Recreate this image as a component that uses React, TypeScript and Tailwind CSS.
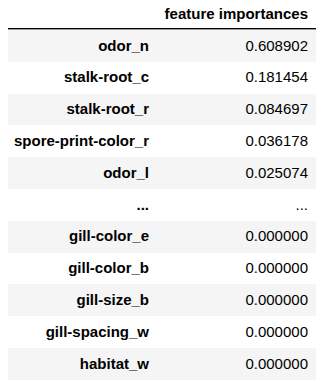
import React from "react";

const rows: [string, string][] = [
  ["odor_n", "0.608902"],
  ["stalk-root_c", "0.181454"],
  ["stalk-root_r", "0.084697"],
  ["spore-print-color_r", "0.036178"],
  ["odor_l", "0.025074"],
  ["...", "..."],
  ["gill-color_e", "0.000000"],
  ["gill-color_b", "0.000000"],
  ["gill-size_b", "0.000000"],
  ["gill-spacing_w", "0.000000"],
  ["habitat_w", "0.000000"],
];

export default function App() {
  return (
    <div
      className="w-[322px] h-[382px] overflow-hidden bg-white text-black"
      style={{ fontFamily: '"Liberation Sans", Arial, sans-serif' }}
    >
      <div className="ml-[8px] w-[308px] text-[15px]">
        <div className="flex h-[29px] items-center border-b border-black">
          <div className="w-[149px]" />
          <div className="flex-1 pr-[8px] text-right font-bold">feature importances</div>
        </div>
        <div className="h-[1px] bg-[#9a9a9a]" />
        {rows.map(([k, v], i) => (
          <div
            key={k}
            className={`flex h-[31.8px] items-center ${i % 2 === 0 ? "bg-[#f5f5f5]" : "bg-white"}`}
          >
            <div className="w-[149px] pr-[8px] text-right font-bold">{k}</div>
            <div className="flex-1 pr-[8px] text-right">{v}</div>
          </div>
        ))}
      </div>
    </div>
  );
}
